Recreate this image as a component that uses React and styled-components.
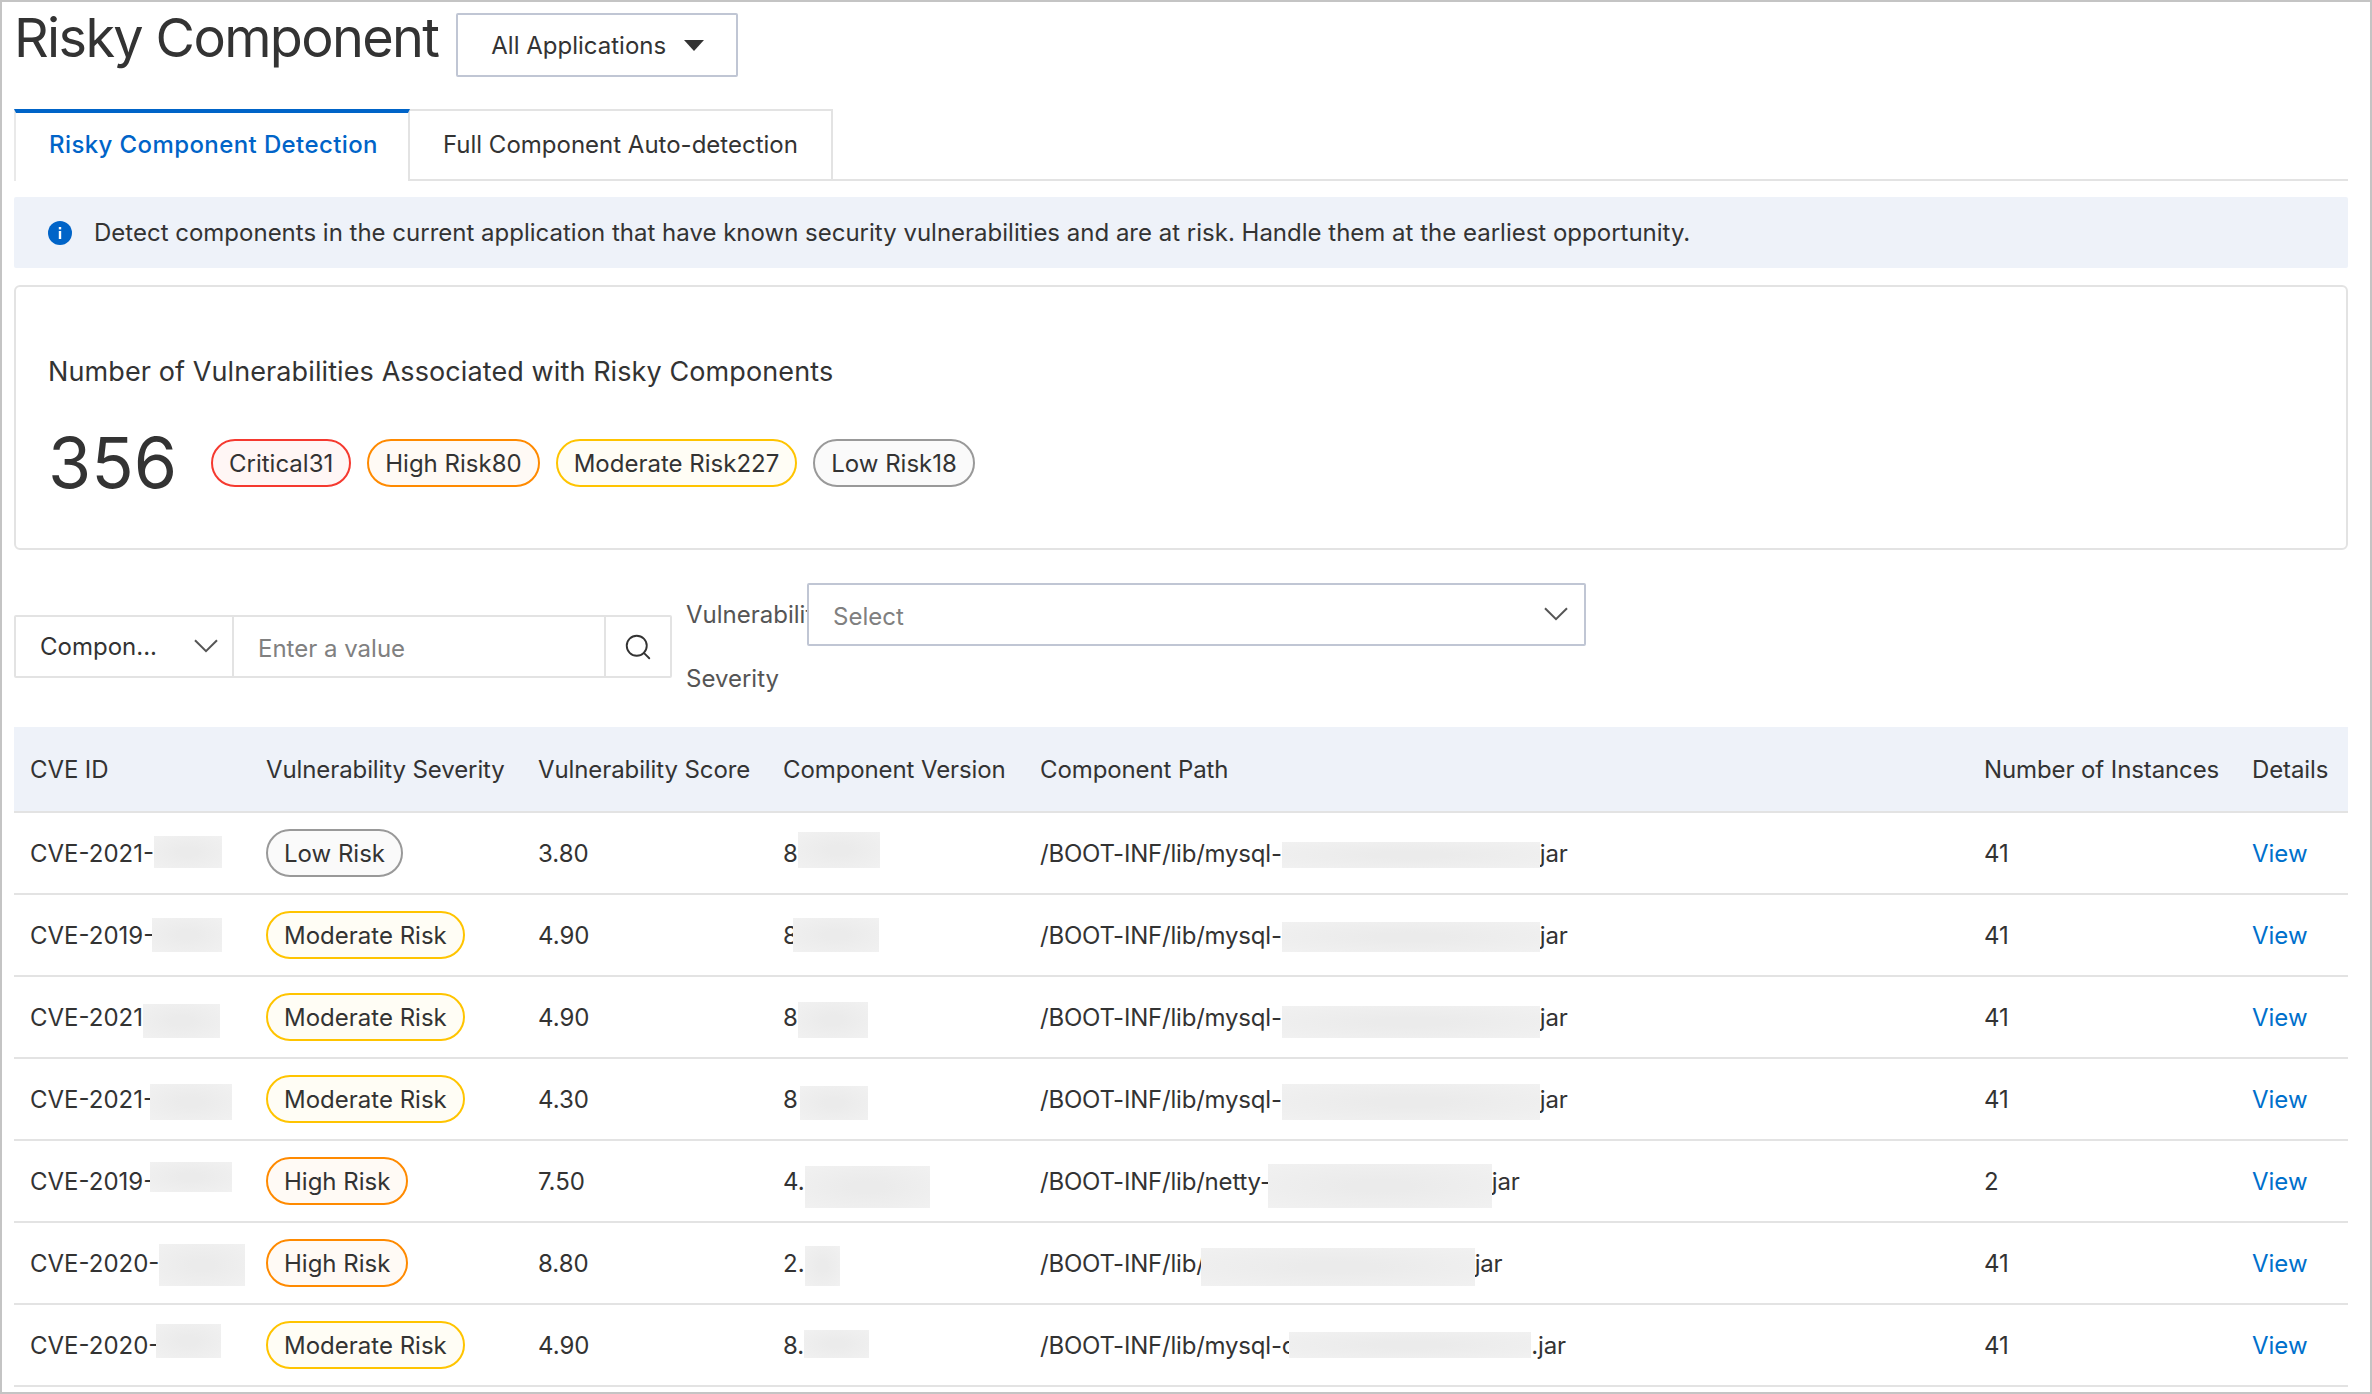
import React from "react";
import styled, { createGlobalStyle } from "styled-components";
import { Search } from "lucide-react";

const GlobalStyle = createGlobalStyle`
  html, body { margin: 0; padding: 0; background: #fff; }
  body { font-family: Inter, "Liberation Sans", sans-serif; color: #333; }
  * { box-sizing: border-box; }
`;

const Page = styled.div`
  width: 2372px;
  height: 1394px;
  border: 2px solid #c4c4c4;
  padding: 11px 22px 0 12px;
  overflow: hidden;
`;

const Header = styled.div`
  display: flex;
  align-items: center;
  gap: 18px;
  height: 64px;
`;

const Title = styled.h1`
  margin: 0 0 14px;
  font-size: 54px;
  font-weight: 400;
  line-height: 64px;
  letter-spacing: -1.65px;
  color: #333;
`;

const AppSelect = styled.div`
  width: 282px;
  height: 64px;
  display: flex;
  align-items: center;
  gap: 18px;
  padding-left: 33px;
  border: 2px solid #c0c6d4;
  border-radius: 2px;
  font-size: 24px;
`;

const Tabs = styled.div`
  display: flex;
  margin-top: 32px;
  height: 72px;
  border-bottom: 2px solid #e3e3e3;
`;

const Tab = styled.div`
  display: flex;
  align-items: center;
  height: ${(p) => (p.$active ? "72px" : "70px")};
  padding: ${(p) => (p.$active ? "0 30px 6px 33px" : "0 33px 1px")};
  font-size: 24px;
  font-weight: ${(p) => (p.$active ? 500 : 400)};
  letter-spacing: ${(p) => (p.$active ? "0.4px" : "0")};
  color: ${(p) => (p.$active ? "#0064c8" : "#333")};
  background: #fff;
  border-top: ${(p) => (p.$active ? "4px solid #0064c8" : "2px solid #e3e3e3")};
  border-left: ${(p) => (p.$active ? "2px solid #e9e9e9" : "none")};
  border-right: 2px solid #e3e3e3;
`;

const Banner = styled.div`
  display: flex;
  align-items: center;
  gap: 22px;
  height: 71px;
  margin-top: 16px;
  padding-left: 34px;
  background: #eef2f9;
  border-radius: 2px;
  font-size: 24px;
`;

const SummaryCard = styled.section`
  display: flex;
  flex-direction: column;
  justify-content: center;
  gap: 49px;
  height: 265px;
  margin-top: 17px;
  padding: 6px 0 0 32px;
  border: 2px solid #e3e3e3;
  border-radius: 6px;
`;

const CardTitle = styled.div`
  font-size: 27px;
  line-height: 36px;
  letter-spacing: 0.1px;
`;

const CountRow = styled.div`
  display: flex;
  align-items: center;
  height: 48px;
`;

const BigCount = styled.span`
  width: 163px;
  font-size: 70px;
  line-height: 48px;
`;

const TagList = styled.div`
  display: flex;
  gap: 16px;
`;

const levels = {
  critical: { line: "#f5392f", fill: "#fff6f5" },
  high: { line: "#ff8a00", fill: "#fffaf5" },
  moderate: { line: "#ffc400", fill: "#fffdf5" },
  low: { line: "#999999", fill: "#fafafa" },
};

const RiskTag = styled.span`
  display: inline-flex;
  align-items: center;
  height: 48px;
  padding: 0 16px;
  border: 2px solid ${(p) => levels[p.$level].line};
  background: ${(p) => levels[p.$level].fill};
  border-radius: 24px;
  font-size: 24px;
  white-space: nowrap;
`;

const FilterRow = styled.div`
  display: flex;
  margin-top: 33px;
  height: 128px;
`;

const SearchGroup = styled.div`
  display: flex;
  width: 658px;
  height: 63px;
  margin-top: 32px;
  border: 2px solid #e3e3e3;
  border-radius: 2px;
  font-size: 24px;
`;

const FieldPicker = styled.div`
  display: flex;
  align-items: center;
  justify-content: space-between;
  width: 218px;
  padding: 0 14px 0 24px;
  border-right: 2px solid #e3e3e3;
`;

const ValueInput = styled.div`
  display: flex;
  align-items: center;
  flex: 1;
  padding: 3px 0 0 24px;
  color: #808080;
`;

const SearchButton = styled.div`
  display: flex;
  align-items: center;
  justify-content: center;
  width: 66px;
  border-left: 2px solid #e3e3e3;
`;

const FilterLabel = styled.div`
  width: 121px;
  margin-left: 14px;
  overflow: hidden;
  font-size: 24px;
  line-height: 64px;
  color: #555;
`;

const SeveritySelect = styled.div`
  display: flex;
  align-items: center;
  justify-content: space-between;
  width: 779px;
  height: 63px;
  padding: 0 16px 0 24px;
  border: 2px solid #c0c6d4;
  border-radius: 2px;
  font-size: 24px;
  color: #808080;
`;

const SelectText = styled.span`
  padding-top: 3px;
`;

const Table = styled.table`
  width: 2334px;
  margin-top: 16px;
  border-collapse: separate;
  border-spacing: 0;
  table-layout: fixed;
  font-size: 24px;
`;

const Th = styled.th`
  height: 86px;
  padding: 0 16px;
  text-align: left;
  font-weight: 400;
  letter-spacing: -0.1px;
  white-space: nowrap;
  background: #eef2f9;
  border-bottom: 2px solid #e3e3e3;
`;

const Td = styled.td`
  height: 82px;
  padding: 0 16px;
  border-bottom: 2px solid #e3e3e3;
  white-space: nowrap;
`;

const Redacted = styled.div`
  display: flex;
  align-items: center;
  white-space: pre;
  letter-spacing: ${(p) => (p.$tight ? "-0.2px" : "0")};
`;

const Mask = styled.span`
  flex: none;
  width: ${(p) => p.$w}px;
  height: ${(p) => p.$h}px;
  margin-left: ${(p) => p.$ml || 0}px;
  transform: translateY(${(p) => p.$dy || 0}px);
  background: radial-gradient(ellipse at center, #ebebeb 20%, #f1f1f1 100%);
`;

const ViewLink = styled.a`
  color: #0070cc;
  text-decoration: none;
`;

const Caret = () => (
  <svg width="20" height="11" viewBox="0 0 20 11">
    <path d="M0 0h20L10 11z" fill="#333" />
  </svg>
);

const Chevron = ({ size = 24 }) => (
  <svg width={size} height={size * 0.6} viewBox="0 0 24 14" fill="none" stroke="#555" strokeWidth="2">
    <path d="M1 1l11 11L23 1" />
  </svg>
);

const InfoIcon = () => (
  <svg width="24" height="24" viewBox="0 0 24 24">
    <circle cx="12" cy="12" r="12" fill="#0064c8" />
    <rect x="10.8" y="10" width="2.4" height="8" fill="#fff" />
    <rect x="10.8" y="6" width="2.4" height="2.4" fill="#fff" />
  </svg>
);

const columns = [236, 272, 245, 257, 944, 268, 112];
const headers = [
  "CVE ID",
  "Vulnerability Severity",
  "Vulnerability Score",
  "Component Version",
  "Component Path",
  "Number of Instances",
  "Details",
];

const tagLabels = { low: "Low Risk", moderate: "Moderate Risk", high: "High Risk" };

const rows = [
  {
    cve: "CVE-2021-", cveMask: { $w: 68, $h: 32, $dy: -1 },
    level: "low", score: "3.80",
    ver: "8", verMask: { $w: 82, $h: 36, $dy: -3 },
    path: "/BOOT-INF/lib/mysql-", pathMask: { $w: 258, $h: 26, $dy: 2 }, end: "jar", count: 41,
  },
  {
    cve: "CVE-2019-", cveMask: { $w: 70, $h: 34, $ml: -2 },
    level: "moderate", score: "4.90",
    ver: "8", verMask: { $w: 86, $h: 34, $ml: -5 },
    path: "/BOOT-INF/lib/mysql-", pathMask: { $w: 258, $h: 30, $dy: 2 }, end: "jar", count: 41,
  },
  {
    cve: "CVE-2021", cveMask: { $w: 77, $h: 34, $dy: 4 },
    level: "moderate", score: "4.90",
    ver: "8", verMask: { $w: 70, $h: 36, $dy: 3 },
    path: "/BOOT-INF/lib/mysql-", pathMask: { $w: 258, $h: 32, $dy: 5 }, end: "jar", count: 41,
  },
  {
    cve: "CVE-2021-", cveMask: { $w: 82, $h: 36, $dy: 3, $ml: -4 },
    level: "moderate", score: "4.30",
    ver: "8", verMask: { $w: 68, $h: 34, $dy: 4, $ml: 2 },
    path: "/BOOT-INF/lib/mysql-", pathMask: { $w: 258, $h: 36, $dy: 3 }, end: "jar", count: 41,
  },
  {
    cve: "CVE-2019-", cveMask: { $w: 82, $h: 30, $dy: -4, $ml: -4 },
    level: "high", score: "7.50",
    ver: "4.", verMask: { $w: 125, $h: 42, $dy: 6 },
    path: "/BOOT-INF/lib/netty-", pathMask: { $w: 224, $h: 44, $dy: 5, $ml: -3 }, end: "jar", count: 2,
  },
  {
    cve: "CVE-2020-", cveMask: { $w: 86, $h: 42, $dy: 2 },
    level: "high", score: "8.80",
    ver: "2.", verMask: { $w: 35, $h: 40, $dy: 3 },
    path: "/BOOT-INF/lib/", pathMask: { $w: 274, $h: 38, $dy: 4, $ml: -4 }, end: "jar", count: 41,
  },
  {
    cve: "CVE-2020-", cveMask: { $w: 65, $h: 34, $dy: -4, $ml: -3 },
    level: "moderate", score: "4.90",
    ver: "8.", verMask: { $w: 65, $h: 28, $dy: -1 },
    path: "/BOOT-INF/lib/mysql-c", pathMask: { $w: 242, $h: 26, $ml: -6 }, end: ".jar", count: 41,
  },
];

export default function App() {
  return (
    <Page>
      <GlobalStyle />
      <Header>
        <Title>Risky Component</Title>
        <AppSelect>
          All Applications
          <Caret />
        </AppSelect>
      </Header>

      <Tabs>
        <Tab $active>Risky Component Detection</Tab>
        <Tab>Full Component Auto-detection</Tab>
      </Tabs>

      <Banner>
        <InfoIcon />
        Detect components in the current application that have known security vulnerabilities and are at risk. Handle them at the earliest opportunity.
      </Banner>

      <SummaryCard>
        <CardTitle>Number of Vulnerabilities Associated with Risky Components</CardTitle>
        <CountRow>
          <BigCount>356</BigCount>
          <TagList>
            <RiskTag $level="critical">Critical31</RiskTag>
            <RiskTag $level="high">High Risk80</RiskTag>
            <RiskTag $level="moderate">Moderate Risk227</RiskTag>
            <RiskTag $level="low">Low Risk18</RiskTag>
          </TagList>
        </CountRow>
      </SummaryCard>

      <FilterRow>
        <SearchGroup>
          <FieldPicker>
            Compon...
            <Chevron />
          </FieldPicker>
          <ValueInput>Enter a value</ValueInput>
          <SearchButton>
            <Search size={30} strokeWidth={1.5} color="#333" />
          </SearchButton>
        </SearchGroup>
        <FilterLabel>Vulnerability Severity</FilterLabel>
        <SeveritySelect>
          <SelectText>Select</SelectText>
          <Chevron />
        </SeveritySelect>
      </FilterRow>

      <Table>
        <colgroup>
          {columns.map((w, i) => (
            <col key={i} width={w} />
          ))}
        </colgroup>
        <thead>
          <tr>
            {headers.map((h) => (
              <Th key={h}>{h}</Th>
            ))}
          </tr>
        </thead>
        <tbody>
          {rows.map((r, i) => (
            <tr key={i}>
              <Td>
                <Redacted>
                  {r.cve}
                  <Mask {...r.cveMask} />
                </Redacted>
              </Td>
              <Td>
                <RiskTag $level={r.level}>{tagLabels[r.level]}</RiskTag>
              </Td>
              <Td>{r.score}</Td>
              <Td>
                <Redacted>
                  {r.ver}
                  <Mask {...r.verMask} />
                </Redacted>
              </Td>
              <Td>
                <Redacted $tight>
                  {r.path}
                  <Mask {...r.pathMask} />
                  {r.end}
                </Redacted>
              </Td>
              <Td>{r.count}</Td>
              <Td>
                <ViewLink href="#">View</ViewLink>
              </Td>
            </tr>
          ))}
        </tbody>
      </Table>
    </Page>
  );
}
